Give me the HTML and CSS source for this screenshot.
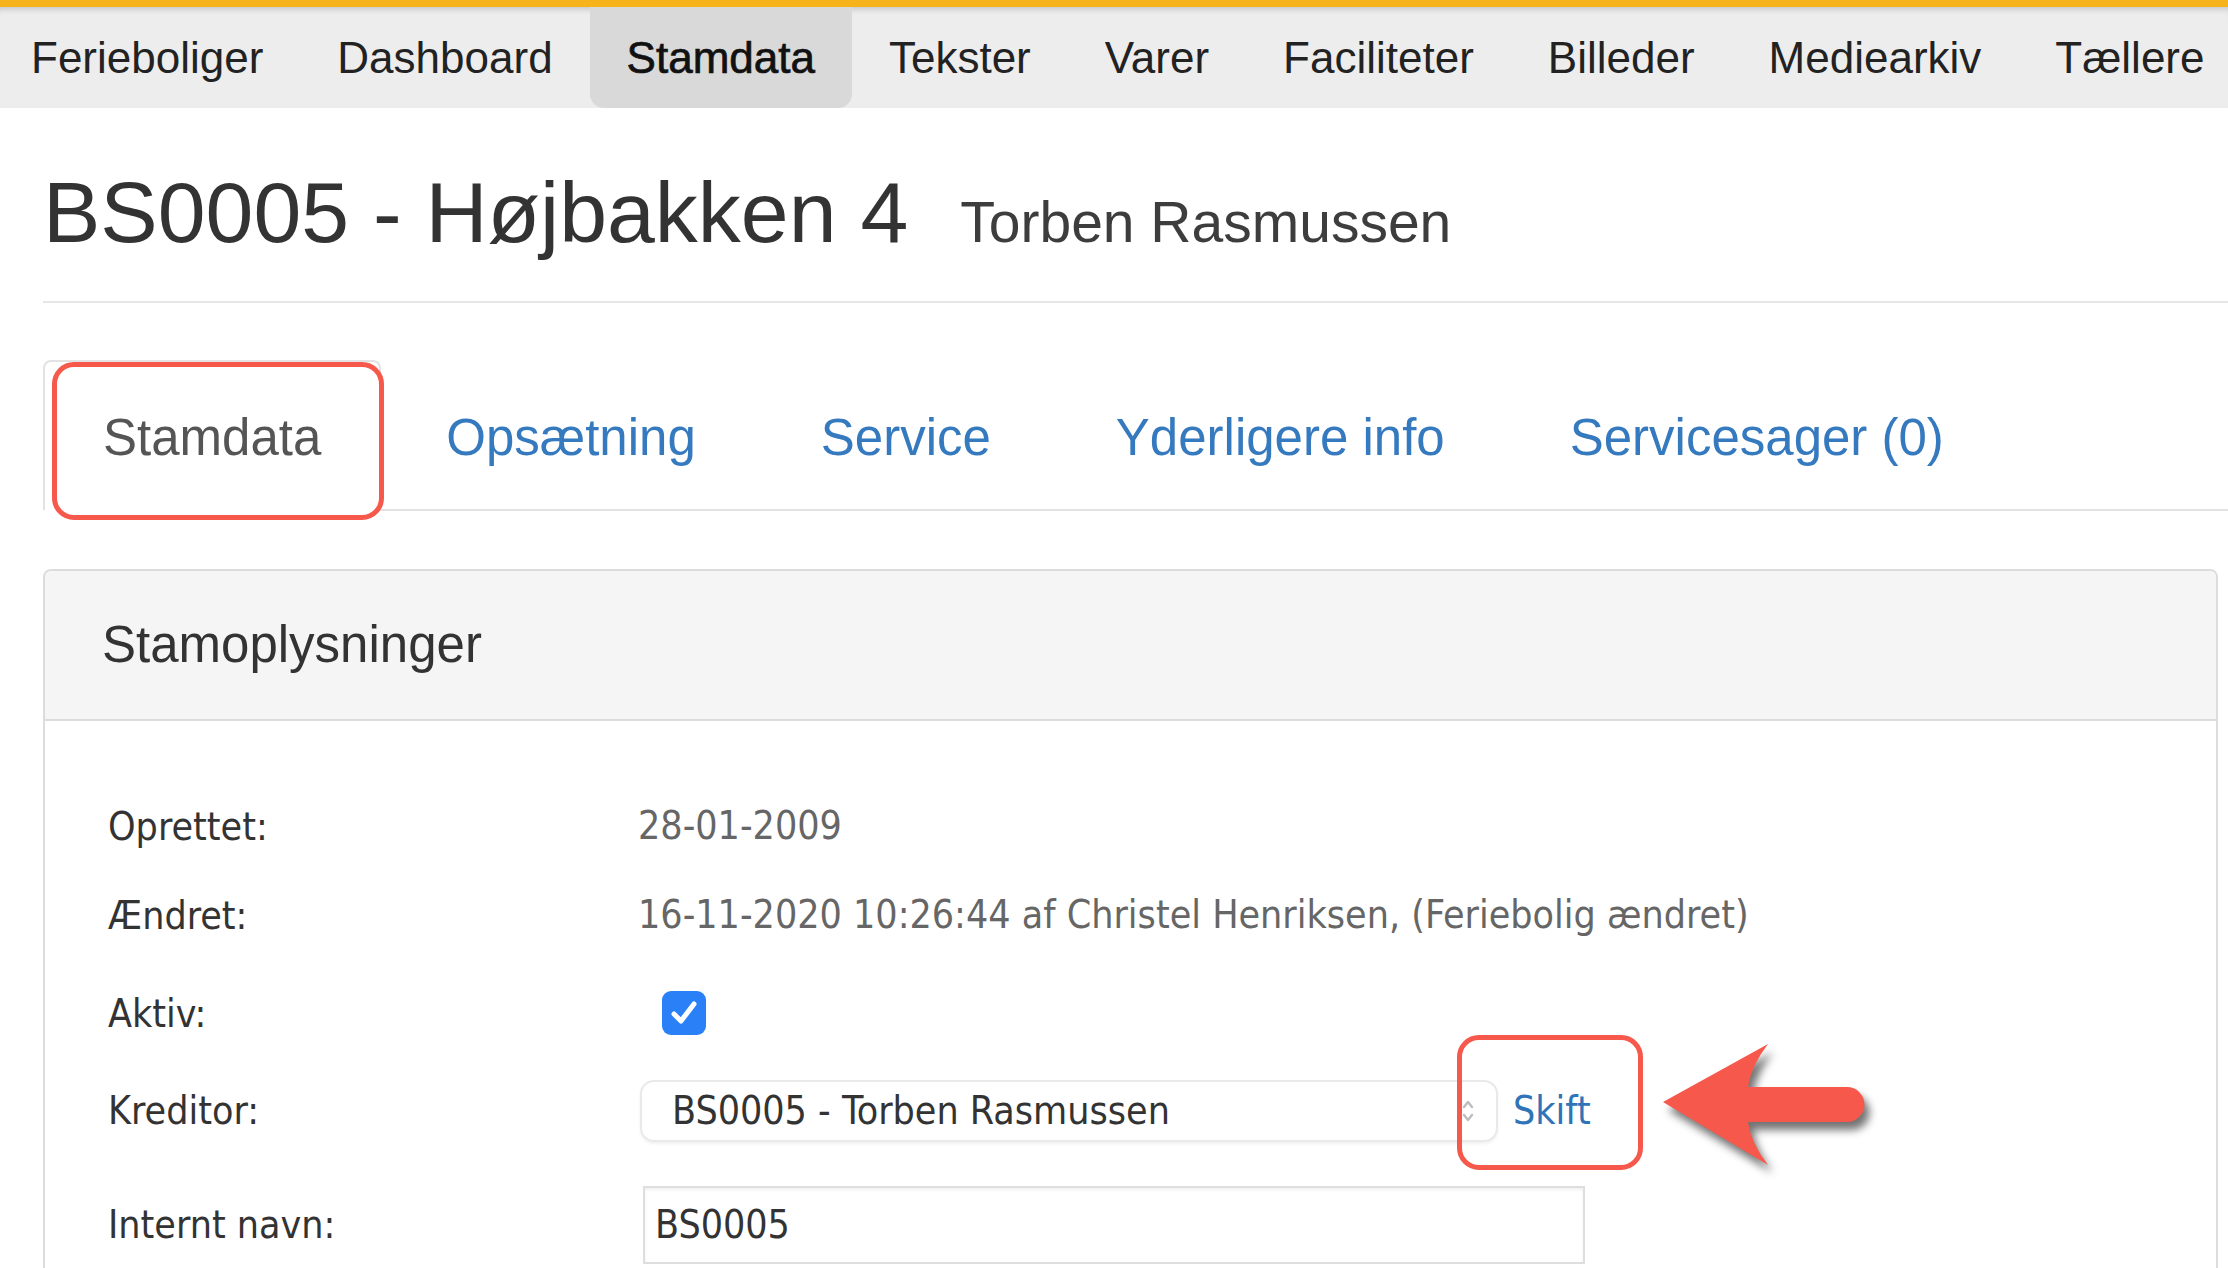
FILE: index.html
```html
<!DOCTYPE html>
<html lang="da">
<head>
  <meta charset="UTF-8">
  <title>BS0005 - Højbakken 4</title>
  <link rel="stylesheet" href="styles.css">
</head>
<body>
  <nav class="topnav">
    <a href="#">Ferieboliger</a>
    <a href="#">Dashboard</a>
    <a href="#" class="active">Stamdata</a>
    <a href="#">Tekster</a>
    <a href="#">Varer</a>
    <a href="#">Faciliteter</a>
    <a href="#">Billeder</a>
    <a href="#">Mediearkiv</a>
    <a href="#">Tællere</a>
  </nav>

  <main class="page">
    <header class="page-header">
      <h1>BS0005 - Højbakken 4<small>Torben Rasmussen</small></h1>
    </header>

    <ul class="tabs">
      <li class="active"><a href="#">Stamdata</a><span class="mark mark-tab"></span></li>
      <li><a href="#">Opsætning</a></li>
      <li><a href="#">Service</a></li>
      <li><a href="#">Yderligere info</a></li>
      <li><a href="#">Servicesager (0)</a></li>
    </ul>

    <section class="panel">
      <div class="panel-heading">Stamoplysninger</div>
      <div class="panel-body">
        <div class="field">
          <label>Oprettet:</label>
          <span class="value">28-01-2009</span>
        </div>
        <div class="field">
          <label>Ændret:</label>
          <span class="value">16-11-2020 10:26:44 af Christel Henriksen, (Feriebolig ændret)</span>
        </div>
        <div class="field field-check">
          <label>Aktiv:</label>
          <span class="checkbox">
            <svg viewBox="0 0 44 44" width="44" height="44"><path d="M12 23 L19 30 L32 13" fill="none" stroke="#fff" stroke-width="5" stroke-linecap="round" stroke-linejoin="round"/></svg>
          </span>
        </div>
        <div class="field">
          <label>Kreditor:</label>
          <div class="kreditor">
            <div class="select">
              <span>BS0005 - Torben Rasmussen</span>
              <svg class="select-arrows" viewBox="0 0 16 30" width="16" height="30"><path d="M4 11 L8 6 L12 11 M4 19 L8 24 L12 19" fill="none" stroke="#bdbdbd" stroke-width="2.4" stroke-linecap="round" stroke-linejoin="round"/></svg>
            </div>
            <span class="skift">
              <a href="#">Skift</a>
              <span class="mark mark-skift"></span>
              <svg class="arrow" viewBox="0 0 230 170" width="230" height="170">
                <path d="M8 70 L113 12 Q96 34 93 55 L192 55 A17.5 17.5 0 0 1 192 90 L93 90 Q96 111 113 133 Z" fill="#f6584b"/>
              </svg>
            </span>
          </div>
        </div>
        <div class="field">
          <label>Internt navn:</label>
          <div class="input">BS0005</div>
        </div>
      </div>
    </section>
  </main>
</body>
</html>
```

FILE: styles.css
```css
body {
  margin: 0;
  background: #fff;
  color: #333;
  font-family: "Liberation Sans", Arial, sans-serif;
}
a { text-decoration: none; }

/* top menu */
.topnav {
  display: flex;
  height: 101px;
  border-top: 7px solid #f7b31b;
  background: #ededed;
  box-shadow: inset 0 7px 6px -5px rgba(0,0,0,0.18);
}
.topnav a {
  display: flex;
  align-items: center;
  padding: 0 37px;
  font-size: 44px;
  color: #222;
}
.topnav a:first-child { padding-left: 31px; }
.topnav a.active {
  background: #d9d9d9;
  border-radius: 0 0 14px 14px;
  color: #111;
  -webkit-text-stroke: 0.7px #111;
}

.page { padding-left: 43px; }

.page-header {
  padding: 57px 0 41px;
  border-bottom: 2px solid #e6e6e6;
}
h1 {
  margin: 0;
  font-size: 86px;
  font-weight: normal;
  line-height: 1.1;
  color: #333;
}
h1 small {
  margin-left: 52px;
  font-size: 57px;
  color: #3d3d3d;
}

/* tabs */
.tabs {
  display: flex;
  list-style: none;
  margin: 57px 0 0;
  padding: 0;
  border-bottom: 2px solid #e2e2e2;
}
.tabs li {
  position: relative;
  margin: 0 5px -2px 0;
}
.tabs a {
  display: block;
  padding: 47px 58px 43px;
  line-height: 57px;
  font-size: 51px;
  color: #3579bf;
  border: 2px solid transparent;
  border-radius: 8px 8px 0 0;
}
.tabs li.active a {
  color: #555;
  background: #fff;
  border-color: #e2e2e2 #e2e2e2 #fff;
}

/* red annotation boxes */
.mark {
  position: absolute;
  box-sizing: border-box;
  border: 5px solid #f6584b;
  border-radius: 22px;
}
.mark-tab {
  left: 9px;
  top: 2px;
  width: 332px;
  height: 158px;
}
.mark-skift {
  left: -56px;
  top: -54px;
  width: 186px;
  height: 135px;
}
.arrow {
  position: absolute;
  left: 142px;
  top: -57px;
  filter: drop-shadow(5px 8px 4px rgba(0,0,0,0.55));
}

/* panel */
.panel {
  margin: 58px 10px 0 0;
  border: 2px solid #dcdcdc;
  border-radius: 8px;
}
.panel-heading {
  padding: 46px 57px;
  line-height: 56px;
  font-size: 51px;
  color: #333;
  background: #f5f5f5;
  border-bottom: 2px solid #dcdcdc;
  border-radius: 8px 8px 0 0;
}
.panel-body {
  display: flex;
  flex-direction: column;
  gap: 44px;
  padding: 83px 0 40px 63px;
  font-family: "DejaVu Sans Condensed", "DejaVu Sans", sans-serif;
  font-stretch: condensed;
  font-size: 39px;
}
.field {
  display: flex;
  align-items: center;
  min-height: 44px;
}
.field label {
  width: 530px;
  flex: none;
  color: #333;
}
.field .value { color: #666; line-height: 44px; }
.field-check { padding-top: 9px; }

.checkbox {
  display: block;
  width: 44px;
  height: 44px;
  margin-left: 24px;
  border-radius: 9px;
  background: #2a80f7;
}
.checkbox svg { display: block; }

.kreditor {
  display: flex;
  align-items: center;
  margin-left: 2px;
}
.select {
  display: flex;
  align-items: center;
  justify-content: space-between;
  box-sizing: border-box;
  width: 858px;
  height: 62px;
  padding: 0 20px 0 30px;
  border: 2px solid #e9e9e9;
  border-radius: 14px;
  box-shadow: 0 2px 3px rgba(0,0,0,0.06);
  color: #333;
}
.skift {
  position: relative;
  margin-left: 15px;
  line-height: 44px;
}
.skift a { color: #2f73b8; }

.input {
  box-sizing: border-box;
  width: 942px;
  height: 78px;
  margin-left: 5px;
  padding: 0 10px;
  line-height: 74px;
  border: 2px solid #dedede;
  box-shadow: inset 0 2px 3px rgba(0,0,0,0.06);
  color: #333;
}
```
